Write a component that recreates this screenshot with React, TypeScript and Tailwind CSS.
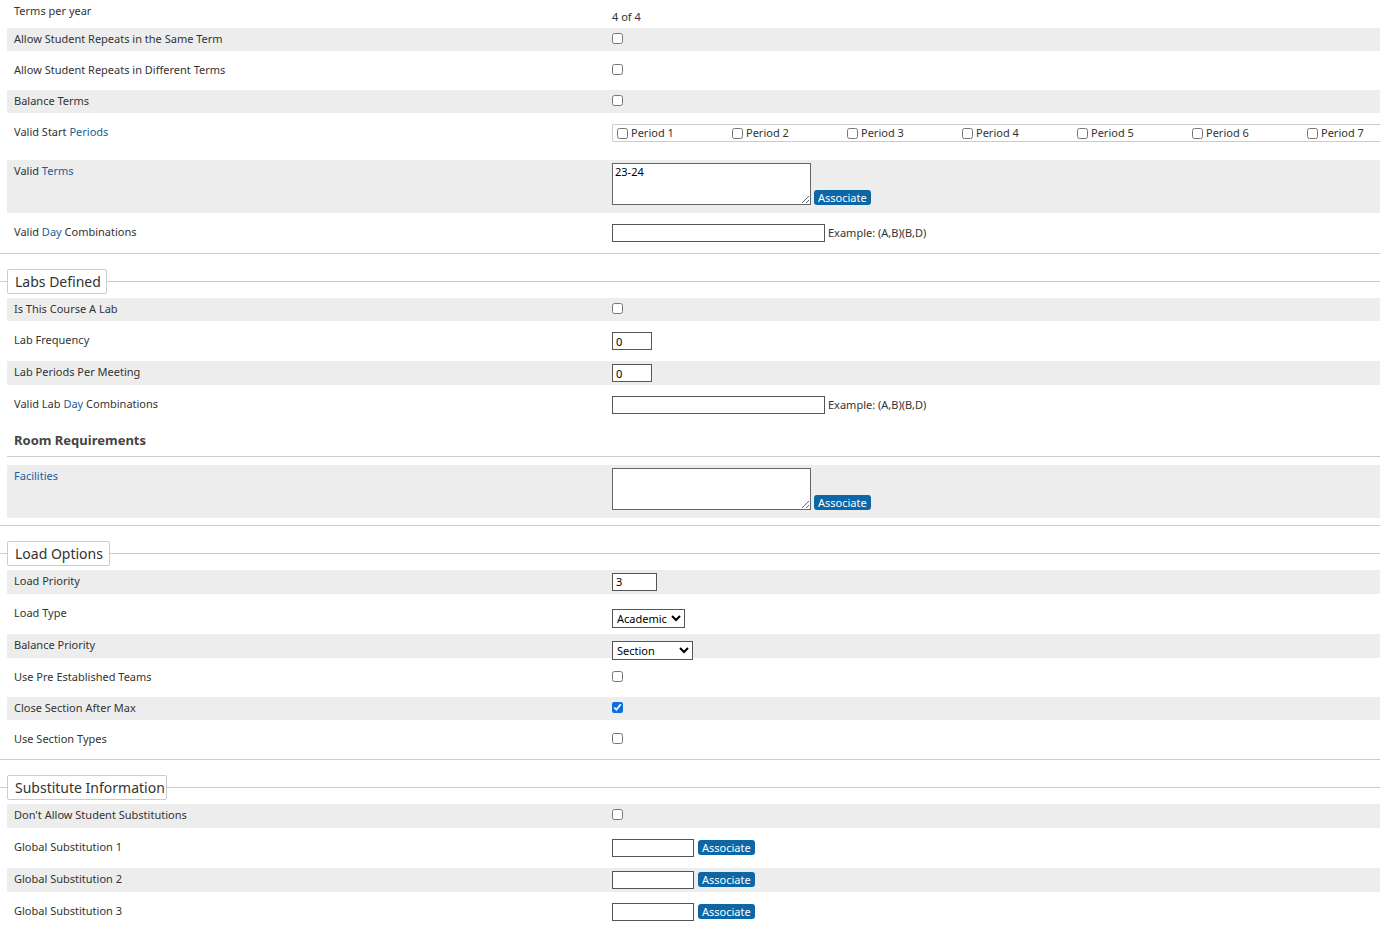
import React from "react";

const link = "text-[#1b5e9b]";

function Row({ label, gray, h = 23, mt = 8, children }: { label: React.ReactNode; gray?: boolean; h?: number; mt?: number; children?: React.ReactNode }) {
  return (
    <div
      className={`ml-[7px] flex ${gray ? "bg-[#ededed]" : ""}`}
      style={{ height: h, marginTop: mt }}
    >
      <div className="w-[605px] shrink-0 pl-[7px] pt-[3px] text-[11px] text-[#333]">{label}</div>
      <div className="flex-1 pt-[3px]">{children}</div>
    </div>
  );
}

const Check = ({ on }: { on?: boolean }) => (
  <input type="checkbox" defaultChecked={on} className="m-0 mt-[2px] h-[11px] w-[11px] align-top accent-[#0b6fe0]" />
);

const Btn = () => (
  <button className="rounded-[3px] bg-[#0d66a6] px-[4px] py-0 text-[11px] leading-[15px] text-white">Associate</button>
);

const Text = ({ w, v = "" }: { w: number; v?: string }) => (
  <input
    defaultValue={v}
    className="h-[18px] border border-[#555] bg-white px-[3px] text-[11px] text-black align-top"
    style={{ width: w }}
  />
);

const Legend = ({ title, w }: { title: string; w: number }) => (
  <div className="relative mt-[15px] h-[25px]">
    <div className="absolute left-0 right-0 top-[12px] border-t border-[#ccc]" />
    <div
      className="relative ml-[7px] flex h-[25px] items-center rounded-[2px] border border-[#ccc] bg-white pl-[7px] text-[14px] text-[#333]"
      style={{ width: w }}
    >
      {title}
    </div>
  </div>
);

const Area = ({ v = "" }: { v?: string }) => (
  <div className="flex items-end gap-[3px]">
    <textarea defaultValue={v} className="h-[42px] w-[199px] resize border border-[#666] bg-white px-[2px] py-0 text-[11px] text-black" />
    <Btn />
  </div>
);

export default function App() {
  return (
    <div className="w-[1380px] bg-white pb-2 font-['Liberation_Sans',Arial,sans-serif]">
      <Row label="Terms per year" mt={0} h={20}>
        <span className="text-[11px] text-[#333]">4 of 4</span>
      </Row>
      <Row label="Allow Student Repeats in the Same Term" gray mt={8}><Check /></Row>
      <Row label="Allow Student Repeats in Different Terms" mt={8}><Check /></Row>
      <Row label="Balance Terms" gray mt={8}><Check /></Row>
      <Row label={<>Valid Start <span className={link}>Periods</span></>} h={31} mt={8}>
        <div className="flex h-[18px] items-center rounded-l-[2px] border border-r-0 border-[#ccc] pl-[4px]">
          {[1, 2, 3, 4, 5, 6, 7].map((n) => (
            <label key={n} className="flex w-[115px] items-center gap-[3px] text-[11px] text-[#333]">
              <input type="checkbox" className="m-0 h-[11px] w-[11px]" />
              Period {n}
            </label>
          ))}
        </div>
      </Row>
      <Row label={<>Valid <span className={link}>Terms</span></>} gray h={53} mt={8}>
        <Area v="23-24" />
      </Row>
      <Row label={<>Valid <span className={link}>Day</span> Combinations</>} mt={8} h={24}>
        <div className="flex items-center gap-[3px]">
          <Text w={213} />
          <span className="text-[11px] text-[#333]">Example: (A,B)(B,D)</span>
        </div>
      </Row>
      <div className="mt-[8px] border-t border-[#ccc]" />

      <Legend title="Labs Defined" w={100} />
      <Row label="Is This Course A Lab" gray mt={4}><Check /></Row>
      <Row label="Lab Frequency" mt={8} h={24}><Text w={40} v="0" /></Row>
      <Row label="Lab Periods Per Meeting" gray mt={8} h={24}><Text w={40} v="0" /></Row>
      <Row label={<>Valid Lab <span className={link}>Day</span> Combinations</>} mt={8} h={24}>
        <div className="flex items-center gap-[3px]">
          <Text w={213} />
          <span className="text-[11px] text-[#333]">Example: (A,B)(B,D)</span>
        </div>
      </Row>
      <div className="ml-[7px] mt-[14px] border-b border-[#ccc] pb-[5px] pl-[7px] text-[13px] font-bold text-[#444]">Room Requirements</div>
      <Row label={<span className={link}>Facilities</span>} gray h={53} mt={8}>
        <Area />
      </Row>
      <div className="mt-[7px] border-t border-[#ccc]" />

      <Legend title="Load Options" w={103} />
      <Row label="Load Priority" gray mt={4} h={24}><Text w={45} v="3" /></Row>
      <Row label="Load Type" mt={8} h={24}>
        <select className="h-[19px] w-[73px] border border-[#555] bg-white text-[11px] text-black"><option>Academic</option></select>
      </Row>
      <Row label="Balance Priority" gray mt={8} h={24}>
        <select className="h-[19px] w-[81px] border border-[#555] bg-white text-[11px] text-black"><option>Section</option></select>
      </Row>
      <Row label="Use Pre Established Teams" mt={8}><Check /></Row>
      <Row label="Close Section After Max" gray mt={8}><Check on /></Row>
      <Row label="Use Section Types" mt={8}><Check /></Row>
      <div className="mt-[8px] border-t border-[#ccc]" />

      <Legend title="Substitute Information" w={160} />
      <Row label="Don't Allow Student Substitutions" gray mt={4} h={24}><Check /></Row>
      {[1, 2, 3].map((n) => (
        <Row key={n} label={`Global Substitution ${n}`} gray={n === 2} mt={8} h={24}>
          <div className="flex items-center gap-[4px]">
            <Text w={82} />
            <Btn />
          </div>
        </Row>
      ))}
    </div>
  );
}
